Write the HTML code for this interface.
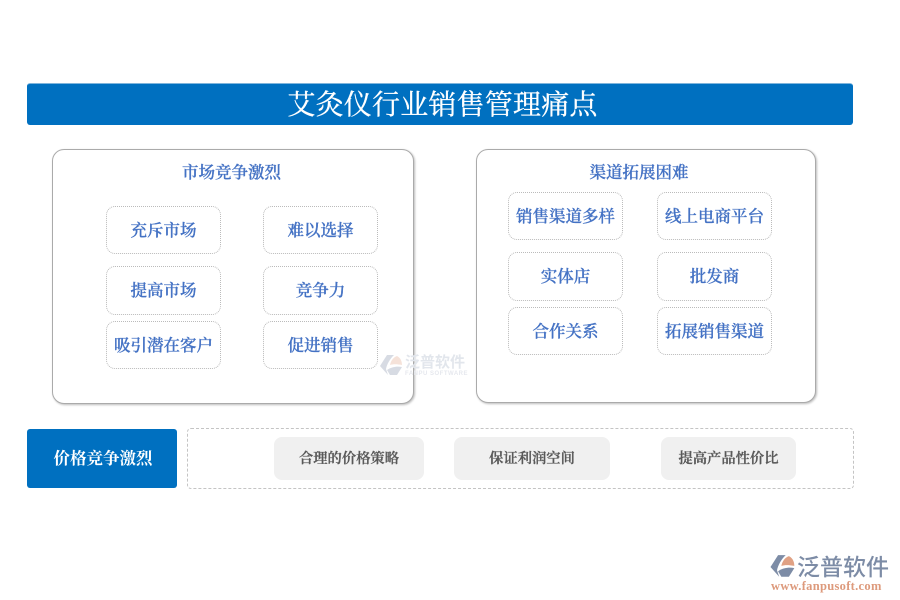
<!DOCTYPE html>
<html lang="zh"><head><meta charset="utf-8"><style>
html,body{margin:0;padding:0;background:#fff}
#p{position:relative;width:900px;height:600px;overflow:hidden;background:#fff;font-family:"Liberation Serif","Noto Serif CJK SC",serif}
#p div{position:absolute;box-sizing:border-box;text-align:center;white-space:nowrap}
.panel{background:#fff;border:1px solid #aaa;border-radius:12px;box-shadow:1px 1px 2px #bbb}
.t{color:#4472c4;font-size:16.5px;font-weight:500;height:24px;line-height:24px;-webkit-text-stroke:.35px #4472c4}
.b{width:115px;background:#fff;border:1px dotted #bbb;border-radius:9px;color:#4472c4;font-size:16.5px;font-weight:500;display:flex;align-items:center;justify-content:center;padding-bottom:3px;-webkit-text-stroke:.35px #4472c4}
.g{top:437px;height:43px;line-height:44px;background:#f0f0f0;border-radius:8px;color:#595959;font-size:14.3px;font-weight:600;-webkit-text-stroke:.3px #595959}
</style></head><body><div id="p">
<div style="left:27px;top:83px;width:826px;height:42px;background:#0070c0;border-top:1px solid #7fb5dc;border-radius:3px;color:#fff;font-size:28px;line-height:44px;letter-spacing:.2px;padding-left:5px;-webkit-text-stroke:.3px #fff">艾灸仪行业销售管理痛点</div>

<div class="panel" style="left:52px;top:149px;width:362px;height:255px"></div>
<div class="t" style="left:182px;top:161px;width:99px">市场竞争激烈</div>
<div class="b" style="left:106px;top:206px;height:48px">充斥市场</div>
<div class="b" style="left:263px;top:206px;height:48px">难以选择</div>
<div class="b" style="left:106px;top:266px;height:49px">提高市场</div>
<div class="b" style="left:263px;top:266px;height:49px">竞争力</div>
<div class="b" style="left:106px;top:321px;height:48px">吸引潜在客户</div>
<div class="b" style="left:263px;top:321px;height:48px">促进销售</div>

<div class="panel" style="left:476px;top:149px;width:340px;height:254px"></div>
<div class="t" style="left:589px;top:161px;width:100px">渠道拓展困难</div>
<div class="b" style="left:508px;top:192px;height:48px">销售渠道多样</div>
<div class="b" style="left:657px;top:192px;height:48px">线上电商平台</div>
<div class="b" style="left:508px;top:252px;height:49px">实体店</div>
<div class="b" style="left:657px;top:252px;height:49px">批发商</div>
<div class="b" style="left:508px;top:307px;height:48px">合作关系</div>
<div class="b" style="left:657px;top:307px;height:48px">拓展销售渠道</div>

<div style="left:27px;top:429px;width:150px;height:59px;background:#0070c0;border-radius:3px;color:#fff;font-size:16.5px;font-weight:700;line-height:59px;padding-left:2px">价格竞争激烈</div>
<div style="left:187px;top:428px;width:667px;height:61px;border:1px dashed #c4c4c4;border-radius:4px"></div>
<div class="g" style="left:274px;width:150px">合理的价格策略</div>
<div class="g" style="left:454px;width:156px">保证利润空间</div>
<div class="g" style="left:661px;width:135px">提高产品性价比</div>

<svg style="position:absolute;left:379px;top:354px;opacity:.3" width="26" height="24" viewBox="0 0 26 24"><path d="M8 1H15C11 5 8 10 7 15L9 21 1 12Z" fill="#7d8ca6"/><path d="M11 11C12 6 15 3 18 2 22 4 23 8 23 11 18 10 14 10 11 11Z" fill="#e0a184"/><path d="M11 21 8 16C12 13 18 12 23 13L18 21Z" fill="#7d8ca6"/></svg>
<div style="left:405px;top:354px;font-family:'Liberation Sans','Noto Sans CJK SC',sans-serif;font-size:15px;line-height:18px;color:#e2e6ec;font-weight:700">泛普软件</div>
<div style="left:405px;top:370px;font-family:'Liberation Sans',sans-serif;font-size:6px;line-height:8px;letter-spacing:.5px;color:#e6e8ee;font-weight:700">FANPU SOFTWARE</div>

<svg style="position:absolute;left:769px;top:554px" width="29" height="26" viewBox="0 0 26 24"><path d="M8 1H15C11 5 8 10 7 15L9 21 1 12Z" fill="#7d8ca6"/><path d="M11 11C12 6 15 3 18 2 22 4 23 8 23 11 18 10 14 10 11 11Z" fill="#e0a184"/><path d="M11 21 8 16C12 13 18 12 23 13L18 21Z" fill="#7d8ca6"/></svg>
<div style="left:797px;top:553px;font-family:'Liberation Sans','Noto Sans CJK SC',sans-serif;font-size:23px;line-height:28px;color:#7d8ca6;font-weight:500">泛普软件</div>
<div style="left:771px;top:579px;font-size:12.5px;line-height:14px;letter-spacing:.3px;color:#dd9a7c;font-weight:700">www.fanpusoft.com</div>
</div></body></html>
